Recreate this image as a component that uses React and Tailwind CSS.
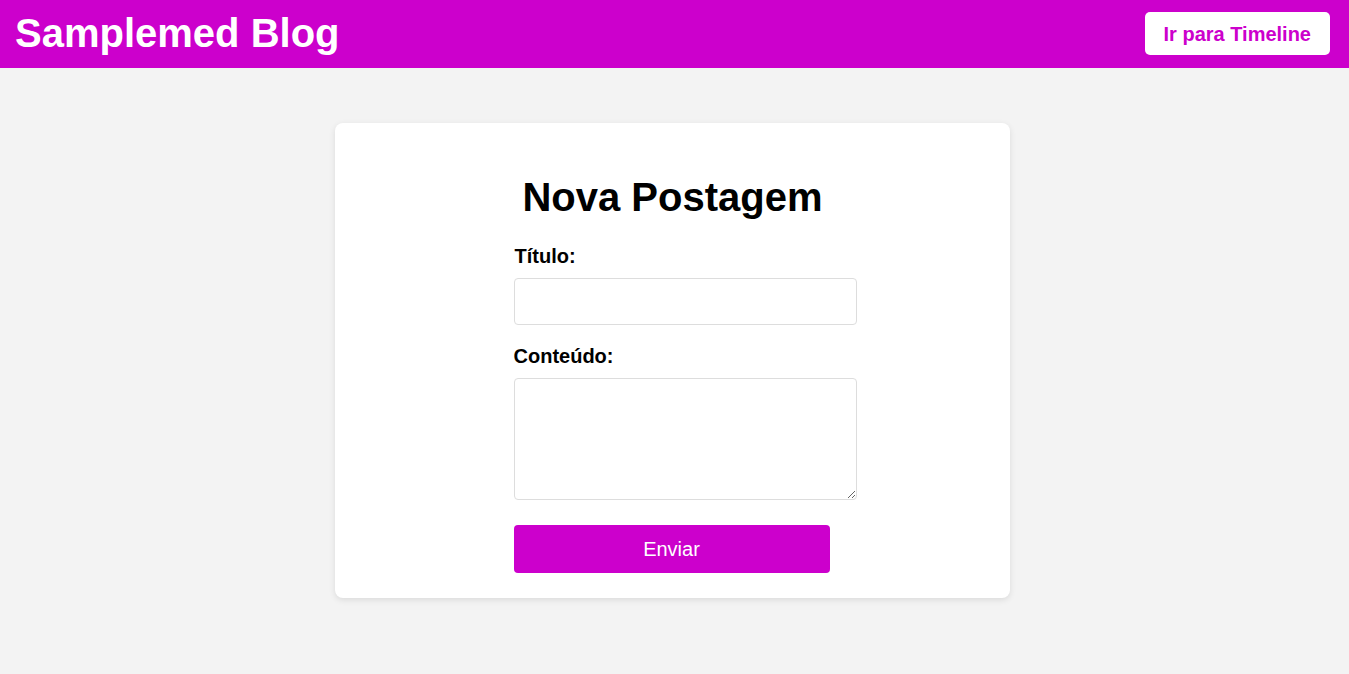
export default function App() {
  const font = { fontFamily: '"Liberation Sans", Arial, sans-serif' };
  return (
    <div className="min-h-[674px] bg-[#f3f3f3]" style={font}>
      <header className="h-[68px] bg-[#cc00cc] flex items-center justify-between pl-[15px] pr-[19px]">
        <h1 className="text-[40px] font-bold text-white leading-[46px] -mt-[3px]">Samplemed Blog</h1>
        <button className="h-[43px] px-[19px] bg-white rounded-[5px] text-[#cc00cc] text-[20px] font-bold -mt-[1px]">
          Ir para Timeline
        </button>
      </header>
      <main className="flex justify-center pt-[55px] pr-[4px]">
        <div className="w-[675px] bg-white rounded-[8px] shadow-[0_2px_6px_rgba(0,0,0,0.1)] pt-[51px] pb-[25px] flex flex-col items-center">
          <h2 className="text-[40px] font-bold text-black leading-[46px]">Nova Postagem</h2>
          <form className="w-[316px] flex flex-col mt-[25px] mr-[2px]">
            <label className="text-[20px] font-bold text-black leading-[23px] pl-[1px]">Título:</label>
            <input
              type="text"
              className="mt-[10px] h-[47px] w-[343px] box-border border border-[#dddddd] rounded-[4px] px-3 text-[16px] outline-none"
            />
            <label className="mt-[20px] text-[20px] font-bold text-black leading-[23px]">Conteúdo:</label>
            <textarea className="mt-[10px] h-[122px] w-[343px] box-border border border-[#dddddd] rounded-[4px] p-3 text-[16px] outline-none resize-y" />
            <button
              type="button"
              className="mt-[25px] h-[48px] w-[316px] bg-[#cc00cc] rounded-[4px] text-white text-[20px]"
            >
              Enviar
            </button>
          </form>
        </div>
      </main>
    </div>
  );
}
